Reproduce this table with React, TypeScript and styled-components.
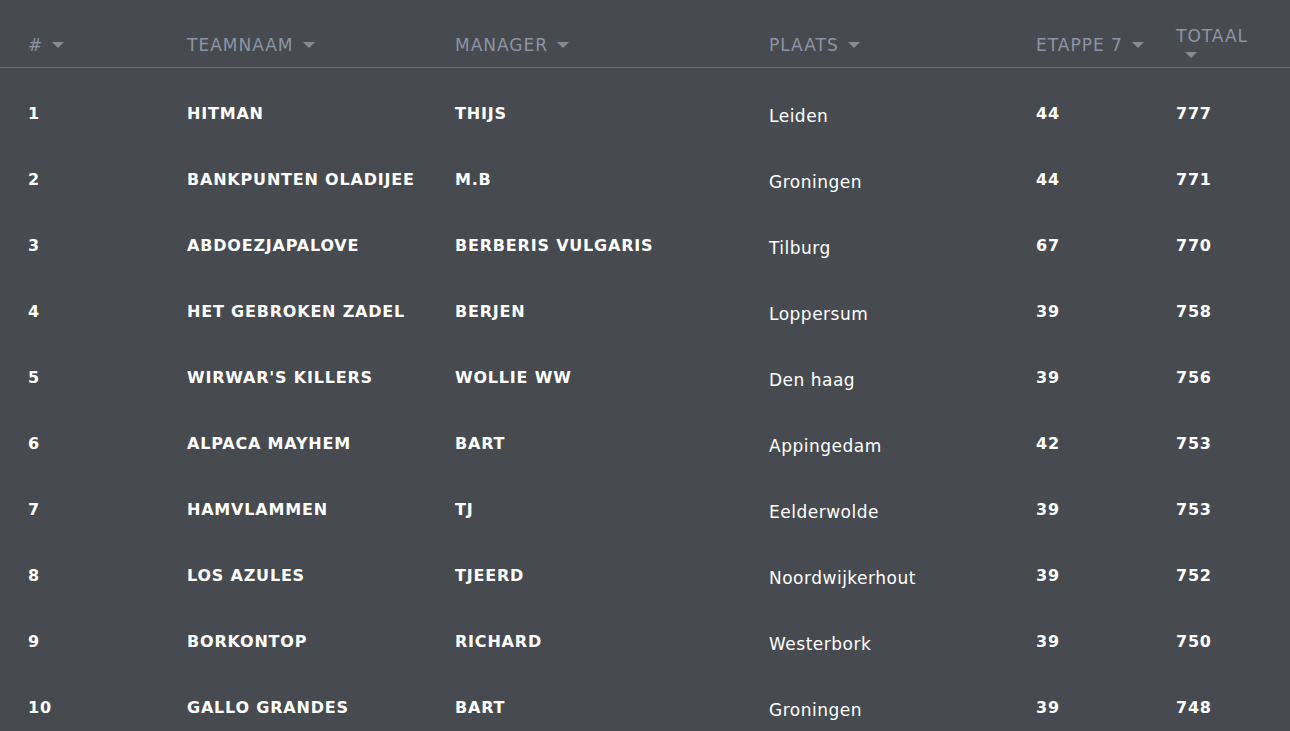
import React from "react";
import styled, { createGlobalStyle } from "styled-components";

const GlobalStyle = createGlobalStyle`
  html, body {
    margin: 0;
    padding: 0;
    background: #474b50;
  }
  body {
    font-family: "DejaVu Sans", "Liberation Sans", sans-serif;
    color: #ffffff;
  }
`;

type Team = {
  rank: number;
  name: string;
  manager: string;
  place: string;
  stage: number;
  total: number;
};

const teams: Team[] = [
  { rank: 1, name: "HITMAN", manager: "THIJS", place: "Leiden", stage: 44, total: 777 },
  { rank: 2, name: "BANKPUNTEN OLADIJEE", manager: "M.B", place: "Groningen", stage: 44, total: 771 },
  { rank: 3, name: "ABDOEZJAPALOVE", manager: "BERBERIS VULGARIS", place: "Tilburg", stage: 67, total: 770 },
  { rank: 4, name: "HET GEBROKEN ZADEL", manager: "BERJEN", place: "Loppersum", stage: 39, total: 758 },
  { rank: 5, name: "WIRWAR'S KILLERS", manager: "WOLLIE WW", place: "Den haag", stage: 39, total: 756 },
  { rank: 6, name: "ALPACA MAYHEM", manager: "BART", place: "Appingedam", stage: 42, total: 753 },
  { rank: 7, name: "HAMVLAMMEN", manager: "TJ", place: "Eelderwolde", stage: 39, total: 753 },
  { rank: 8, name: "LOS AZULES", manager: "TJEERD", place: "Noordwijkerhout", stage: 39, total: 752 },
  { rank: 9, name: "BORKONTOP", manager: "RICHARD", place: "Westerbork", stage: 39, total: 750 },
  { rank: 10, name: "GALLO GRANDES", manager: "BART", place: "Groningen", stage: 39, total: 748 },
];

const columns = ["#", "TEAMNAAM", "MANAGER", "PLAATS", "ETAPPE 7", "TOTAAL"];

const Table = styled.div`
  width: 100%;
`;

const Grid = styled.div`
  display: grid;
  grid-template-columns: 159px 268px 314px 267px 140px 74px;
  padding-left: 28px;
`;

const HeadRow = styled(Grid)`
  height: 68px;
  padding-top: 24px;
  align-items: center;
  border-bottom: 1px solid #6c6b76;
  box-sizing: border-box;
`;

const HeadCell = styled.div`
  color: #8d94a5;
  font-size: 17px;
  line-height: 19px;
  letter-spacing: 1px;
`;

const SortArrow = styled.span`
  display: inline-block;
  width: 0;
  height: 0;
  margin-left: 9px;
  vertical-align: 3px;
  border-left: 6px solid transparent;
  border-right: 6px solid transparent;
  border-top: 6px solid #878b95;
`;

const Body = styled.div`
  padding-top: 13px;
`;

const Row = styled(Grid)`
  height: 66px;
  align-items: center;
`;

const Cell = styled.div<{ $light?: boolean }>`
  font-size: ${(p) => (p.$light ? "17px" : "16px")};
  font-weight: ${(p) => (p.$light ? 400 : 700)};
  letter-spacing: ${(p) => (p.$light ? "0.5px" : "0.8px")};
  line-height: 20px;
  white-space: nowrap;
  padding-top: ${(p) => (p.$light ? "3px" : "0")};
`;

export default function App() {
  return (
    <>
      <GlobalStyle />
      <Table>
        <HeadRow>
          {columns.map((c) => (
            <HeadCell key={c}>
              {c}
              <SortArrow />
            </HeadCell>
          ))}
        </HeadRow>
        <Body>
          {teams.map((t) => (
            <Row key={t.rank}>
              <Cell>{t.rank}</Cell>
              <Cell>{t.name}</Cell>
              <Cell>{t.manager}</Cell>
              <Cell $light>{t.place}</Cell>
              <Cell>{t.stage}</Cell>
              <Cell>{t.total}</Cell>
            </Row>
          ))}
        </Body>
      </Table>
    </>
  );
}
